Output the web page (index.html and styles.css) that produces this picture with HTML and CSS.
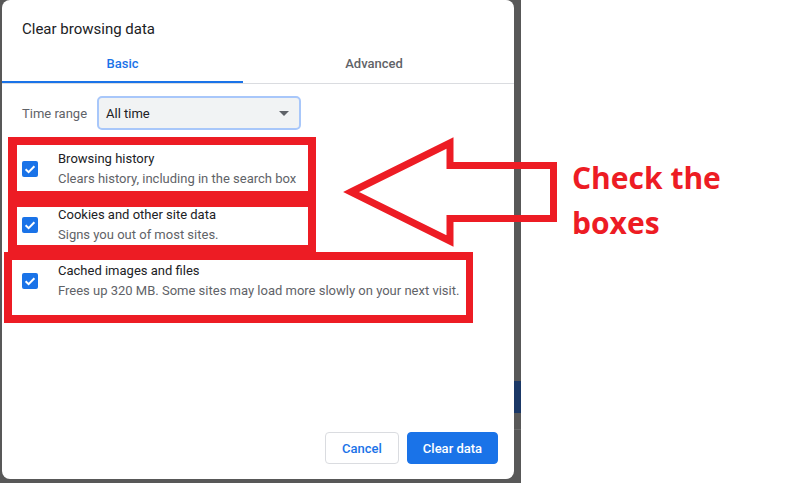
FILE: index.html
```html
<!DOCTYPE html>
<html lang="en">
<head>
<meta charset="utf-8">
<title>Clear browsing data</title>
<link rel="stylesheet" href="styles.css">
</head>
<body>
<div class="page">
  <div class="backdrop">
    <div class="dialog">
      <div class="title">Clear browsing data</div>
      <div class="tabs">
        <div class="tab tab-basic">Basic</div>
        <div class="tab tab-advanced">Advanced</div>
      </div>
      <div class="range-row">
        <span class="range-label">Time range</span>
        <div class="select">
          <span>All time</span>
          <span class="caret"></span>
        </div>
      </div>
      <div class="items">
        <div class="item">
          <span class="checkbox"><svg viewBox="0 0 16 16" width="16" height="16"><path d="M3.6 8.2 L6.6 11.1 L12.4 5.2" fill="none" stroke="#fff" stroke-width="2"/></svg></span>
          <div class="item-text">
            <div class="item-title">Browsing history</div>
            <div class="item-sub">Clears history, including in the search box</div>
          </div>
        </div>
        <div class="item">
          <span class="checkbox"><svg viewBox="0 0 16 16" width="16" height="16"><path d="M3.6 8.2 L6.6 11.1 L12.4 5.2" fill="none" stroke="#fff" stroke-width="2"/></svg></span>
          <div class="item-text">
            <div class="item-title">Cookies and other site data</div>
            <div class="item-sub">Signs you out of most sites.</div>
          </div>
        </div>
        <div class="item">
          <span class="checkbox"><svg viewBox="0 0 16 16" width="16" height="16"><path d="M3.6 8.2 L6.6 11.1 L12.4 5.2" fill="none" stroke="#fff" stroke-width="2"/></svg></span>
          <div class="item-text">
            <div class="item-title">Cached images and files</div>
            <div class="item-sub">Frees up 320 MB. Some sites may load more slowly on your next visit.</div>
          </div>
        </div>
      </div>
      <div class="footer">
        <button class="btn btn-cancel">Cancel</button>
        <button class="btn btn-primary">Clear data</button>
      </div>
    </div>
  </div>
  <div class="note">Check the<br>boxes</div>
</div>
<svg class="annotations" width="801" height="483" viewBox="0 0 801 483">
  <path fill="#ed1c24" fill-rule="evenodd" d="M8 137 H316 V253 H8 Z M17 145 V191 H308 V145 Z M17 207 V245 H308 V207 Z"/>
  <path fill="#ed1c24" fill-rule="evenodd" d="M4 252 H473 V323 H4 Z M12 260 V315 H466 V260 Z"/>
  <polygon points="351,192 450,143 450,165.5 553.5,165.5 553.5,218.5 450,218.5 450,241" fill="none" stroke="#ed1c24" stroke-width="7" stroke-linejoin="miter"/>
</svg>
</body>
</html>
```

FILE: styles.css
```css
* { box-sizing: border-box; }
html, body { margin: 0; padding: 0; background: #fff; }
body {
  width: 801px;
  height: 483px;
  overflow: hidden;
  position: relative;
  font-family: Roboto, "Liberation Sans", sans-serif;
}
.page {
  display: flex;
  height: 483px;
}
.backdrop {
  width: 521px;
  height: 483px;
  flex: none;
  padding-left: 2px;
  background-color: #585858;
  background-image: linear-gradient(to bottom, transparent 381px, #1b3866 381px, #1b3866 413px, transparent 413px, transparent 429px, #6a6a6a 429px, #6a6a6a 430px, transparent 430px);
  background-size: 8px 100%;
  background-position: right top;
  background-repeat: no-repeat;
}
.dialog {
  width: 512px;
  height: 479px;
  background: #fff;
  border-radius: 8px;
  display: flex;
  flex-direction: column;
}
.title {
  padding: 19px 0 0 20px;
  font-size: 15px;
  line-height: 20px;
  color: #202124;
}
.tabs {
  display: flex;
  border-bottom: 1px solid #dadce0;
}
.tab {
  padding: 17px 0 9px;
  font-size: 13px;
  line-height: 16px;
  font-weight: 500;
  text-align: center;
  border-bottom: 2px solid transparent;
}
.tab-basic {
  width: 241px;
  color: #1a73e8;
  border-bottom-color: #1a73e8;
}
.tab-advanced {
  width: 262px;
  color: #5f6368;
}
.range-row {
  display: flex;
  align-items: center;
  padding: 12px 0 0 20px;
}
.range-label {
  font-size: 13px;
  color: #5f6368;
  width: 75px;
}
.select {
  width: 204px;
  height: 34px;
  border: 2px solid #a8c7fa;
  border-radius: 5px;
  background: #f1f3f4;
  display: flex;
  align-items: center;
  justify-content: space-between;
  padding: 0 10px 0 7px;
  font-size: 13px;
  color: #202124;
}
.caret {
  width: 0;
  height: 0;
  border-left: 5px solid transparent;
  border-right: 5px solid transparent;
  border-top: 5px solid #5f6368;
}
.items {
  padding: 11px 0 0 20px;
}
.item {
  height: 56px;
  display: flex;
  align-items: center;
  gap: 20px;
}
.checkbox {
  width: 16px;
  height: 16px;
  border-radius: 2px;
  background: #1a73e8;
  flex: none;
  display: block;
}
.checkbox svg { display: block; }
.item-title {
  font-size: 13px;
  line-height: 20px;
  color: #202124;
}
.item-sub {
  font-size: 13px;
  line-height: 20px;
  color: #5f6368;
}
.footer {
  margin-top: auto;
  display: flex;
  justify-content: flex-end;
  gap: 8px;
  padding: 0 16px 15px 0;
}
.btn {
  height: 32px;
  border-radius: 4px;
  font-family: Roboto, "Liberation Sans", sans-serif;
  font-size: 13px;
  font-weight: 500;
  padding: 0;
  white-space: nowrap;
  cursor: pointer;
}
.btn-cancel {
  width: 74px;
  background: #fff;
  border: 1px solid #dadce0;
  color: #1a73e8;
}
.btn-primary {
  width: 91px;
  background: #1a73e8;
  border: 1px solid #1a73e8;
  color: #fff;
}
.note {
  padding: 155px 0 0 51px;
  font-family: "Open Sans", "Liberation Sans", sans-serif;
  font-weight: 700;
  font-size: 30px;
  line-height: 45px;
  color: #ed1c24;
}
.annotations {
  position: absolute;
  left: 0;
  top: 0;
  pointer-events: none;
}
```
